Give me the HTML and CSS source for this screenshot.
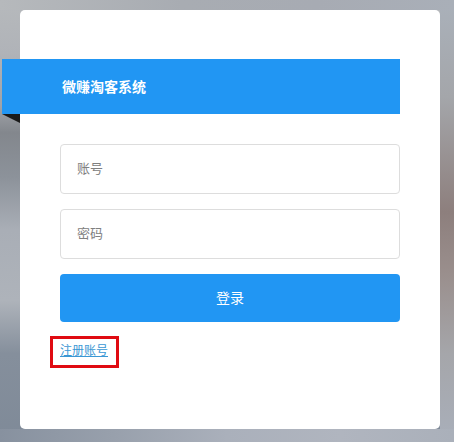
FILE: index.html
```html
<!DOCTYPE html>
<html lang="zh">
<head>
<meta charset="utf-8">
<title>微赚淘客系统</title>
<link rel="stylesheet" href="styles.css">
</head>
<body>
<main class="card">
  <header class="banner">
    <h1 class="banner-title">微赚淘客系统</h1>
    <span class="fold"></span>
  </header>
  <form class="form">
    <div class="field">账号</div>
    <div class="field">密码</div>
    <div class="submit">登录</div>
    <div class="links"><a class="register" href="#">注册账号</a></div>
  </form>
</main>
</body>
</html>
```
FILE: styles.css
```css
* { box-sizing: border-box; }
html, body { margin: 0; height: 442px; overflow: hidden; }
body {
  padding: 10px 14px 13px 20px;
  font-family: "Liberation Sans", "Noto Sans CJK SC", sans-serif;
  background:
    linear-gradient(90deg, #87919f 0%, #98a0ac 25%, #aab0bb 50%, #b0b5bf 75%, #aab0ba 100%) left bottom / 100% 13px no-repeat,
    linear-gradient(90deg, #b6b9bc 0%, #a8acb2 40%, #a7abb3 70%, #a9afb8 100%) left top / 100% 10px no-repeat,
    linear-gradient(180deg, #aab1ba 0%, #a4a6aa 22%, #8d7f7d 48%, #9a8f8d 62%, #a5a6aa 80%, #a9afba 100%) right top / 14px 100% no-repeat,
    linear-gradient(180deg, #b6b9bc 0%, #b0b3b8 12%, #a0a3a8 24%, #83878d 30%, #8c929a 40%, #a9aeb6 52%, #aeb3ba 68%, #858f9c 80%, #7f8a98 100%);
}
.card {
  width: 420px;
  height: 419px;
  background: #fff;
  border-radius: 5px;
  padding-top: 49px;
}
.banner {
  position: relative;
  height: 55px;
  width: 398px;
  margin-left: -18px;
  padding-left: 60px;
  display: flex;
  align-items: center;
  background: #2196f3;
}
.banner-title {
  margin: 0;
  font-size: 14px;
  font-weight: 700;
  color: #fff;
  line-height: 1;
}
.fold {
  position: absolute;
  left: 0;
  top: 55px;
  width: 0;
  height: 0;
  border-top: 9px solid #1a1a1a;
  border-left: 18px solid transparent;
}
.form {
  display: flex;
  flex-direction: column;
  margin: 30px 40px 0;
  width: 340px;
}
.field {
  height: 50px;
  margin-bottom: 15px;
  padding: 0 0 3px 16px;
  display: flex;
  align-items: center;
  border: 1px solid #ddd;
  border-radius: 4px;
  font-size: 13px;
  color: #808080;
}
.submit {
  height: 48px;
  padding-bottom: 3px;
  display: flex;
  align-items: center;
  justify-content: center;
  background: #2196f3;
  color: #fff;
  border-radius: 4px;
  font-size: 14px;
}
.links { margin-top: 14px; display: flex; }
.register {
  font-size: 12px;
  line-height: 24px;
  height: 32px;
  width: 69px;
  margin-left: -10px;
  padding-left: 7px;
  color: #3a97d4;
  text-decoration: underline;
  border: 3px solid #e00b12;
}
```
